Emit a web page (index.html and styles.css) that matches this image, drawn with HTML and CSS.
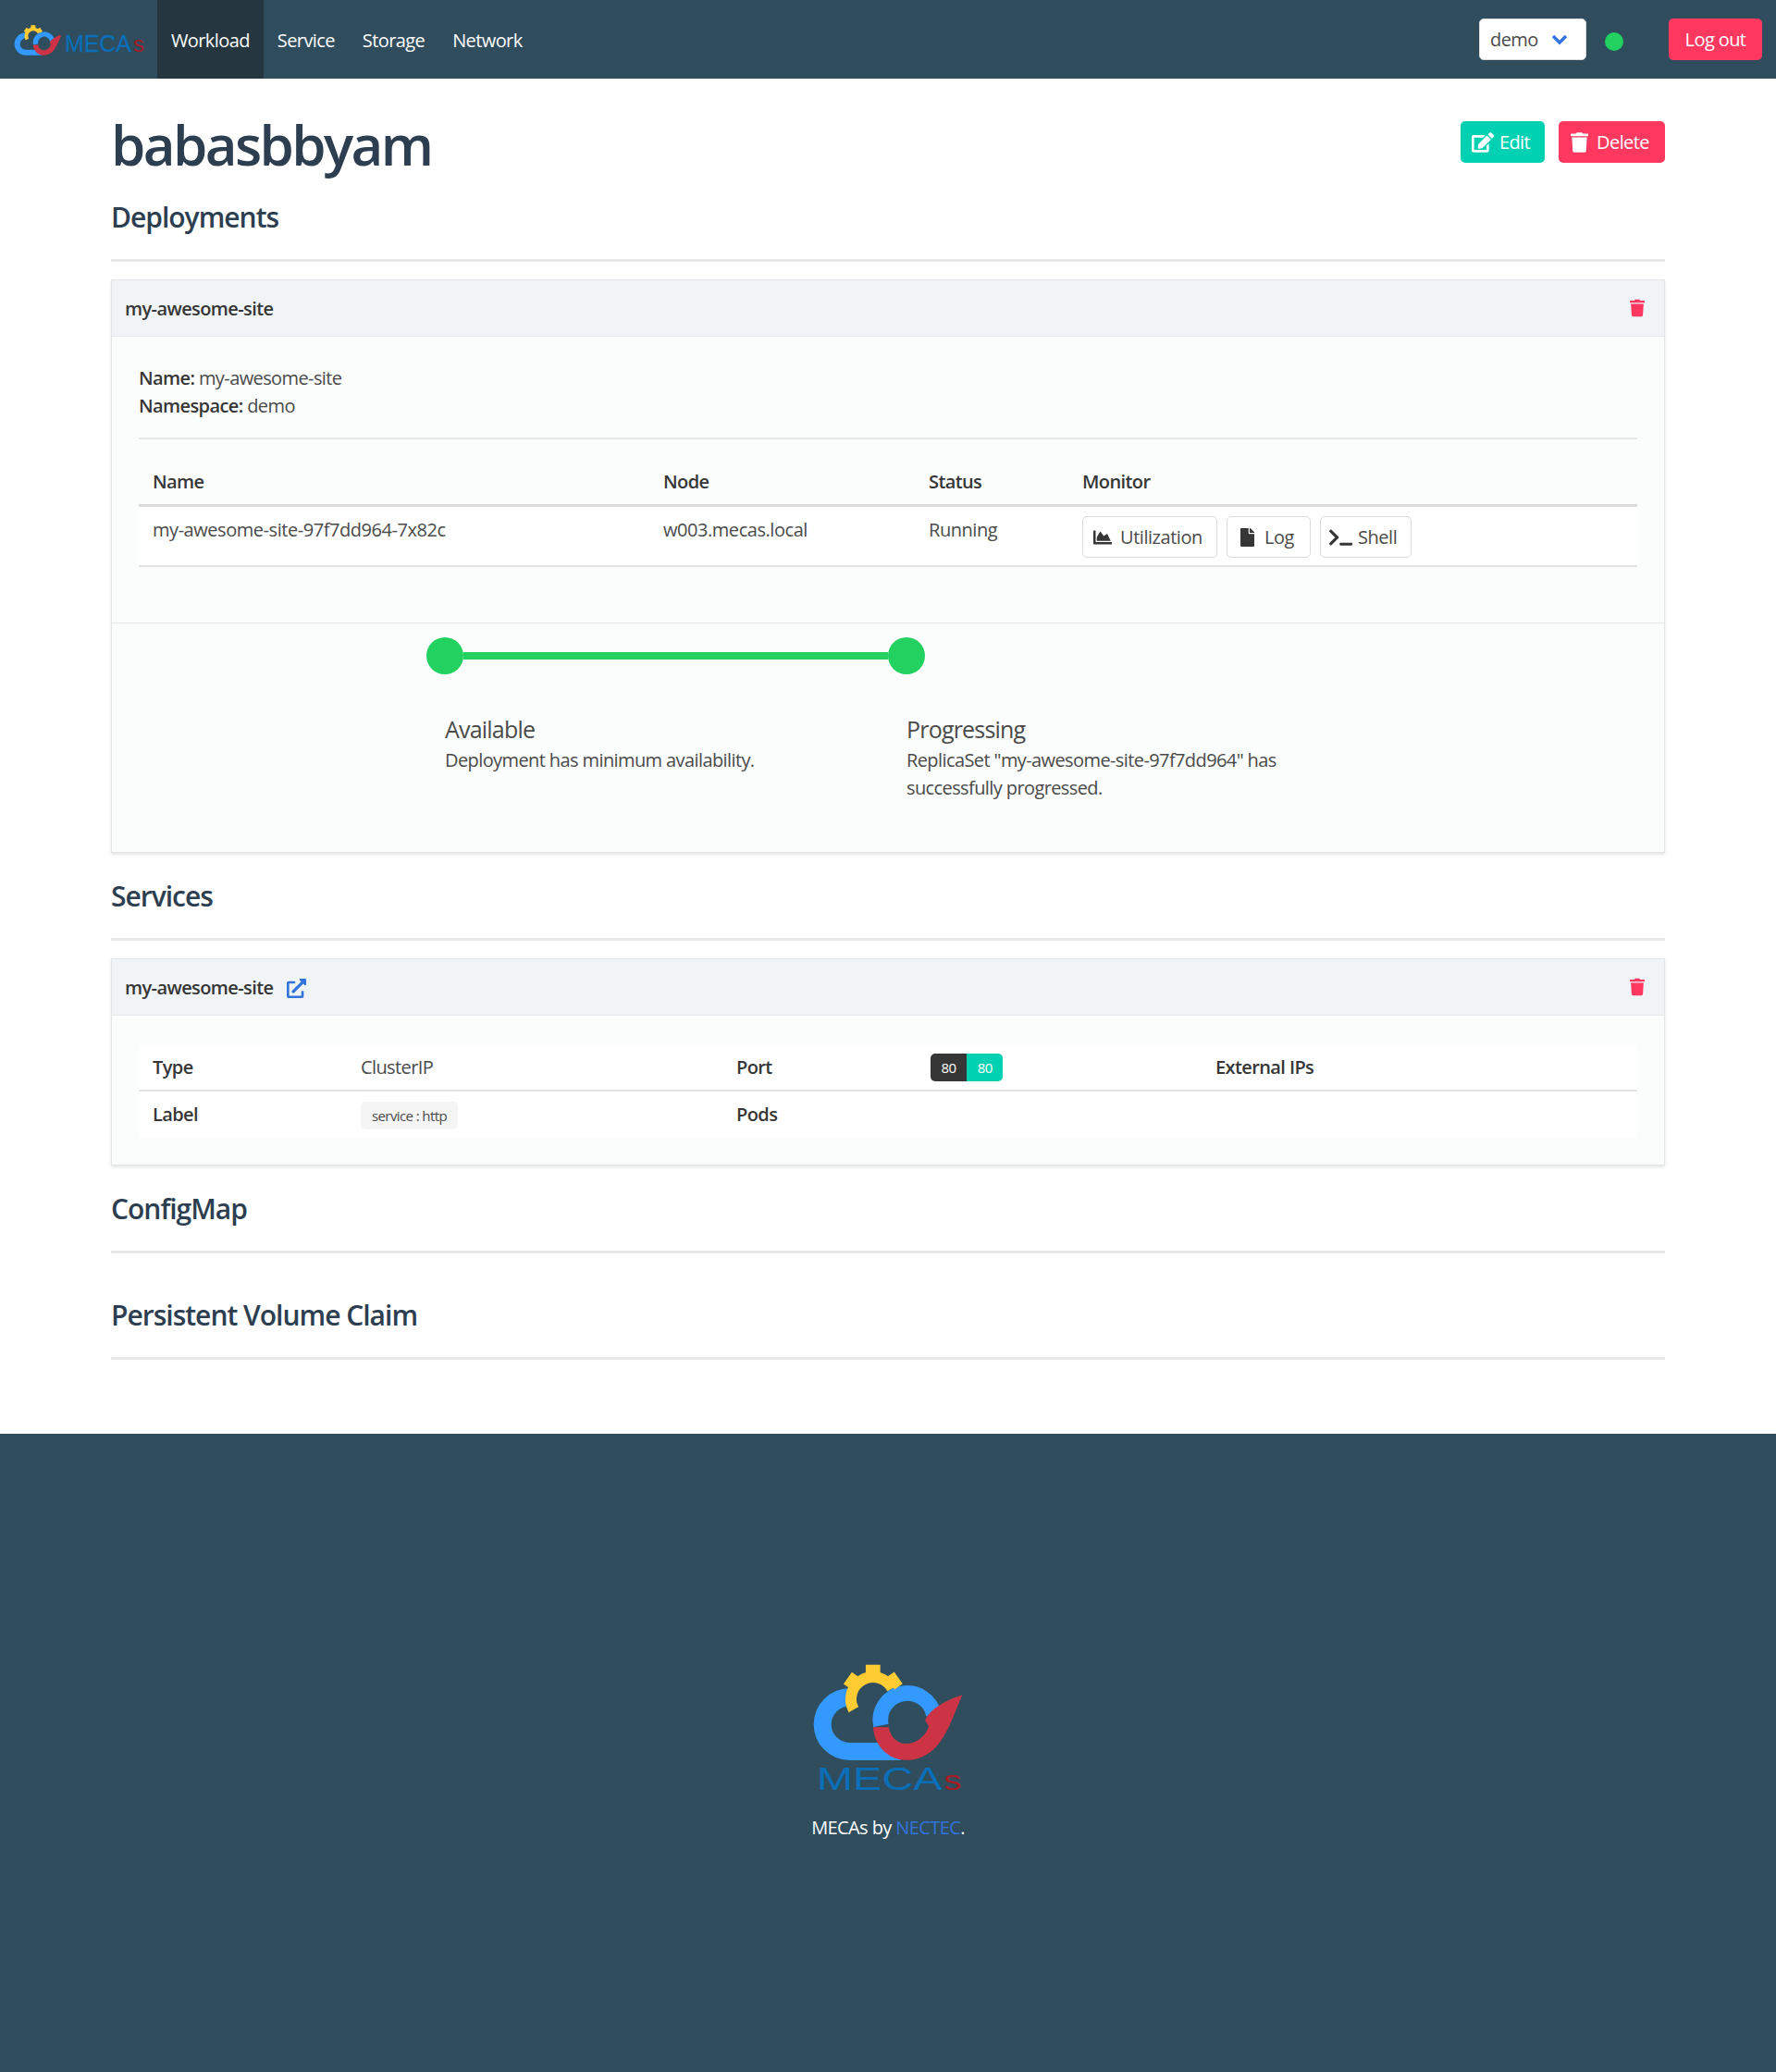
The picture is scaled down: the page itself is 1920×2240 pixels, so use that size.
FILE: index.html
```html
<!DOCTYPE html>
<html lang="en">
<head>
<meta charset="utf-8">
<title>babasbbyam</title>
<link rel="stylesheet" href="styles.css">
</head>
<body>
<svg class="defs" width="0" height="0" aria-hidden="true">
  <symbol id="cloud" viewBox="88 58 484 312">
    <path d="M206 165A87 87 0 0 0 206 340H370" fill="none" stroke="#3399ff" stroke-width="57"/>
    <path d="M307 256A82 82 0 0 1 478 222" fill="none" stroke="#3399ff" stroke-width="50"/>
    <path d="M282 262H333C336 292 360 315 388 315C420 315 452 292 462 258L450 240C462 205 520 172 570 158C545 215 525 280 488 322C462 352 425 368 388 368C330 368 285 320 282 262Z" fill="#cc3344"/>
    <g fill="#ffcc33">
      <path d="M219 205A66 66 0 1 1 344 137" fill="none" stroke="#ffcc33" stroke-width="36"/>
      <rect x="258" y="60" width="47" height="32"/>
      <rect x="258" y="60" width="47" height="32" transform="rotate(-55 282 160)"/>
      <rect x="258" y="60" width="47" height="32" transform="rotate(55 282 160)"/>
    </g>
  </symbol>
  <symbol id="i-trash" viewBox="0 0 448 512"><path fill="currentColor" d="M432 32H312l-9.4-18.7A24 24 0 0 0 281.1 0H166.8a23.72 23.72 0 0 0-21.4 13.3L136 32H16A16 16 0 0 0 0 48v32a16 16 0 0 0 16 16h416a16 16 0 0 0 16-16V48a16 16 0 0 0-16-16zM53.2 467a48 48 0 0 0 47.9 45h245.8a48 48 0 0 0 47.9-45L416 128H32z"/></symbol>
  <symbol id="i-edit" viewBox="0 0 576 512"><path fill="currentColor" d="M402.6 83.2l90.2 90.2c3.8 3.8 3.8 10 0 13.8L274.4 405.6l-92.8 10.3c-12.4 1.4-22.9-9.1-21.5-21.5l10.3-92.8L388.8 83.2c3.8-3.8 10-3.8 13.8 0zm162-22.9l-48.8-48.8c-15.2-15.2-39.9-15.2-55.2 0l-35.4 35.4c-3.8 3.8-3.8 10 0 13.8l90.2 90.2c3.8 3.8 10 3.8 13.8 0l35.4-35.4c15.2-15.3 15.2-40 0-55.2zM384 346.2V448H64V128h229.8c3.2 0 6.2-1.3 8.5-3.5l40-40c7.6-7.6 2.2-20.5-8.5-20.5H48C21.5 64 0 85.5 0 112v352c0 26.5 21.5 48 48 48h352c26.5 0 48-21.5 48-48V306.2c0-10.7-12.9-16-20.5-8.5l-40 40c-2.2 2.3-3.5 5.3-3.5 8.5z"/></symbol>
  <symbol id="i-chart" viewBox="0 0 512 512"><path fill="currentColor" d="M500 384c6.6 0 12 5.4 12 12v40c0 6.6-5.4 12-12 12H12c-6.6 0-12-5.4-12-12V76c0-6.6 5.4-12 12-12h40c6.6 0 12 5.4 12 12v308h436zM372.7 159.5L288 216l-85.3-113.7c-5.1-6.8-15.5-6.3-19.9 1L96 248v104h384l-89.9-187.8c-3.2-6.5-11.4-8.7-17.4-4.7z"/></symbol>
  <symbol id="i-file" viewBox="0 0 384 512"><path fill="currentColor" d="M224 136V0H24C10.7 0 0 10.7 0 24v464c0 13.3 10.7 24 24 24h336c13.3 0 24-10.7 24-24V160H248c-13.2 0-24-10.8-24-24zm160-14.1v6.1H256V0h6.1c6.4 0 12.5 2.5 17 7l97.9 98c4.5 4.5 7 10.6 7 16.9z"/></symbol>
  <symbol id="i-term" viewBox="0 0 640 512"><path fill="currentColor" d="M257.981 272.971L63.638 467.314c-9.373 9.373-24.569 9.373-33.941 0L7.029 444.647c-9.357-9.357-9.375-24.522-.04-33.901L161.011 256 6.99 101.255c-9.335-9.379-9.317-24.544.04-33.901l22.667-22.667c9.373-9.373 24.569-9.373 33.941 0L257.981 239.03c9.373 9.372 9.373 24.568 0 33.941zM640 456v-32c0-13.255-10.745-24-24-24H312c-13.255 0-24 10.745-24 24v32c0 13.255 10.745 24 24 24h304c13.255 0 24-10.745 24-24z"/></symbol>
  <symbol id="i-ext" viewBox="0 0 512 512"><path fill="currentColor" d="M432,320H400a16,16,0,0,0-16,16V448H64V128H208a16,16,0,0,0,16-16V80a16,16,0,0,0-16-16H48A48,48,0,0,0,0,112V464a48,48,0,0,0,48,48H400a48,48,0,0,0,48-48V336A16,16,0,0,0,432,320ZM488,0h-128c-21.37,0-32.05,25.91-17,41l35.73,35.73L135,320.37a24,24,0,0,0,0,34L157.67,377a24,24,0,0,0,34,0L435.28,133.32,471,169c15,15,41,4.5,41-17V24A24,24,0,0,0,488,0Z"/></symbol>
</svg>

<nav class="navbar">
  <a class="brand" href="#">
    <svg class="brand-cloud"><use href="#cloud"/></svg>
    <svg class="brand-word" viewBox="0 0 88 30">
      <text x="0" y="24" textLength="72" lengthAdjust="spacingAndGlyphs" class="word word-small">MECA</text>
      <text x="74" y="24" textLength="12" lengthAdjust="spacingAndGlyphs" class="word-s">s</text>
    </svg>
  </a>
  <a class="nav-item is-active" href="#">Workload</a>
  <a class="nav-item" href="#">Service</a>
  <a class="nav-item" href="#">Storage</a>
  <a class="nav-item" href="#">Network</a>
  <div class="nav-end">
    <div class="select"><span>demo</span><svg class="chevron" viewBox="0 0 18 12"><path d="M2 2l7 7 7-7" fill="none" stroke="currentColor" stroke-width="3.4"/></svg></div>
    <span class="dot"></span>
    <a class="btn btn-danger btn-logout" href="#">Log out</a>
  </div>
</nav>

<main class="container">
  <header class="page-head">
    <h1>babasbbyam</h1>
    <div class="actions">
      <a class="btn btn-primary" href="#"><svg class="ic ic-edit"><use href="#i-edit"/></svg>Edit</a>
      <a class="btn btn-danger" href="#"><svg class="ic ic-del"><use href="#i-trash"/></svg>Delete</a>
    </div>
  </header>

  <section class="block">
    <h2>Deployments</h2>
    <hr class="rule">
    <div class="card">
      <div class="card-head"><span class="card-title">my-awesome-site</span><svg class="ic-trash"><use href="#i-trash"/></svg></div>
      <div class="card-body">
        <p><strong>Name:</strong> my-awesome-site</p>
        <p><strong>Namespace:</strong> demo</p>
        <hr class="inner-rule">
        <table class="pods">
          <colgroup><col class="c-name"><col class="c-node"><col class="c-status"><col></colgroup>
          <thead><tr><th>Name</th><th>Node</th><th>Status</th><th>Monitor</th></tr></thead>
          <tbody><tr>
            <td>my-awesome-site-97f7dd964-7x82c</td>
            <td>w003.mecas.local</td>
            <td>Running</td>
            <td><div class="tools">
              <a class="tool tool-util" href="#"><svg class="ti ti-chart"><use href="#i-chart"/></svg>Utilization</a>
              <a class="tool tool-log" href="#"><svg class="ti ti-file"><use href="#i-file"/></svg>Log</a>
              <a class="tool tool-shell" href="#"><svg class="ti ti-term"><use href="#i-term"/></svg>Shell</a>
            </div></td>
          </tr></tbody>
        </table>
      </div>
      <div class="timeline">
        <div class="track"><span class="node"></span><span class="link"></span><span class="node"></span></div>
        <div class="steps">
          <div class="step"><h3>Available</h3><p>Deployment has minimum availability.</p></div>
          <div class="step"><h3>Progressing</h3><p>ReplicaSet "my-awesome-site-97f7dd964" has successfully progressed.</p></div>
        </div>
      </div>
    </div>
  </section>

  <section class="block">
    <h2>Services</h2>
    <hr class="rule">
    <div class="card">
      <div class="card-head"><span class="card-title">my-awesome-site<svg class="ic-ext"><use href="#i-ext"/></svg></span><svg class="ic-trash"><use href="#i-trash"/></svg></div>
      <div class="card-body card-body-svc">
        <table class="svc">
          <colgroup><col class="s-a"><col class="s-b"><col class="s-c"><col class="s-d"><col></colgroup>
          <tbody>
            <tr class="svc-top"><th>Type</th><td>ClusterIP</td><th>Port</th><td><span class="ports"><span class="p-dark">80</span><span class="p-teal">80</span></span></td><th>External IPs</th></tr>
            <tr class="svc-bottom"><th>Label</th><td><span class="tag">service : http</span></td><th>Pods</th><td></td><td></td></tr>
          </tbody>
        </table>
      </div>
    </div>
  </section>

  <section class="block">
    <h2>ConfigMap</h2>
    <hr class="rule">
  </section>

  <section class="block block-pvc">
    <h2>Persistent Volume Claim</h2>
    <hr class="rule">
  </section>
</main>

<footer class="footer">
  <svg class="foot-logo" viewBox="88 58 484 412">
    <use href="#cloud" x="88" y="58" width="484" height="312"/>
    <text x="100" y="465" textLength="405" lengthAdjust="spacingAndGlyphs" class="word word-big">MECA</text>
    <text x="510" y="465" textLength="58" lengthAdjust="spacingAndGlyphs" class="word-s word-s-big">s</text>
  </svg>
  <p>MECAs by <a href="#">NECTEC</a>.</p>
</footer>
</body>
</html>
```
FILE: styles.css
```css
* { box-sizing: border-box; }
html, body { margin: 0; padding: 0; }
body {
  font-family: "Open Sans", "Noto Sans", "Liberation Sans", sans-serif;
  font-size: 20px;
  line-height: 30px;
  color: #4a4a4a;
  background: #fff;
  letter-spacing: -0.6px;
}
a { text-decoration: none; color: inherit; }
p { margin: 0; }
.defs { position: absolute; }
svg { overflow: visible; }

/* navbar */
.navbar { display: flex; height: 85px; background: #304d5d; color: #fff; align-items: stretch; }
.brand { width: 170px; display: flex; align-items: flex-start; padding: 27px 0 0 15px; }
.brand-cloud { width: 52px; height: 33px; flex: none; }
.brand-word { width: 88px; height: 30px; margin: 5px 0 0 3px; flex: none; }
.word { font-family: "Liberation Sans", sans-serif; font-size: 27px; fill: #0a6fb8; letter-spacing: 0; }
.word-small { font-size: 25.5px; stroke: #0a6fb8; stroke-width: .3px; }
.word-big { font-size: 104px; }
.word-s { font-family: "Liberation Sans", sans-serif; font-size: 23px; fill: #a51c24; letter-spacing: 0; }
.word-s-big { font-size: 90px; }
.nav-item { display: flex; align-items: center; padding: 2px 15px 0; }
.nav-item.is-active { background: #253640; }
.nav-end { margin-left: auto; display: flex; align-items: center; padding-right: 15px; }
.select { width: 116px; height: 45px; background: #fff; border-radius: 5px; color: #4a4a4a; display: flex; align-items: center; justify-content: space-between; padding: 1px 19px 0 11px; border: 1px solid #dbdbdb; }
.chevron { width: 18px; height: 12px; color: #3273dc; }
.dot { width: 20px; height: 20px; border-radius: 50%; background: #23d160; margin: 5px 49px 0 20px; }

/* buttons */
.btn { display: inline-flex; align-items: center; justify-content: center; height: 45px; padding: 1px 16px 0 12px; border-radius: 5px; color: #fff; }
.btn-danger { background: #ff3860; width: 101px; }
.btn-logout { padding: 1px 12px 0; }
.btn-primary { background: #00d1b2; width: 91px; }
.actions .btn-danger { width: 115px; }
.actions { display: flex; gap: 15px; margin-top: 8px; }
.ic { height: 22px; flex: none; }
.ic-edit { width: 24px; margin-right: 6px; }
.ic-del { width: 19px; margin-right: 9px; }

/* page */
.container { margin: 0 120px; padding: 38px 0 80px; }
.page-head { display: flex; justify-content: space-between; align-items: flex-start; }
h1 { margin: 0; font-size: 60px; line-height: 66px; font-weight: 550; color: #2c3e50; letter-spacing: -2.6px; }
h2 { margin: 0; font-size: 30px; line-height: 38px; font-weight: 550; color: #2c3e50; letter-spacing: -1px; }
.block { margin-top: 28px; }
.page-head + .block { margin-top: 27px; }
.block-pvc { margin-top: 48px; }
.rule { border: 0; height: 3px; background: #e8e8e8; margin: 26px 0 0; }

/* card */
.card { margin-top: 19px; background: #fbfcfc; border: 1px solid #e3e5e6; box-shadow: 0 2px 3px rgba(10, 10, 10, .1); }
.card-head { height: 61px; background: #f1f4f6; border-bottom: 1px solid #e6e8ea; display: flex; align-items: center; justify-content: space-between; padding: 0 21px 0 14px; }
.card-title { font-weight: 600; color: #363636; display: flex; align-items: center; padding-top: 2px; }
.ic-trash { width: 16px; height: 20px; color: #ff3860; }
.ic-ext { width: 23px; height: 21px; color: #3273dc; margin-left: 14px; }
.card-body { padding: 30px 29px 60px; }
.card-body-svc { padding: 31px 29px 29px; }
strong { font-weight: 600; color: #363636; }
.inner-rule { border: 0; height: 2px; background: #e8e8e8; margin: 19px 0 20px; }

/* tables */
table { border-collapse: collapse; table-layout: fixed; width: 100%; }
th { font-weight: 600; color: #363636; text-align: left; }
.pods th { padding: 11px 15px 9px; border-bottom: 3px solid #dbdbdb; height: 50px; }
.pods td { background: #fff; vertical-align: top; padding: 10px 15px 8px; height: 63px; border-bottom: 2px solid #e4e4e4; letter-spacing: -0.45px; }
.c-name { width: 552px; }
.c-node { width: 287px; }
.c-status { width: 166px; }
.tools { display: flex; gap: 10px; }
.tool { display: flex; align-items: center; height: 45px; border: 1px solid #dbdbdb; border-radius: 5px; background: #fff; color: #4a4a4a; padding-left: 11px; }
.tool-util { width: 146px; }
.tool-log { width: 91px; padding-left: 14px; }
.tool-shell { width: 99px; padding-left: 9px; }
.ti { color: #363636; flex: none; }
.ti-chart { width: 20px; height: 20px; margin-right: 9px; }
.ti-file { width: 15px; height: 20px; margin-right: 11px; }
.ti-term { width: 25px; height: 20px; margin-right: 6px; }

/* timeline */
.timeline { border-top: 1px solid #e4e6e7; padding: 15px 0 54px 340px; height: 248px; }
.track { display: flex; align-items: center; width: 539px; }
.node { width: 40px; height: 40px; border-radius: 50%; background: #23d160; flex: none; }
.link { flex: 1; height: 8px; background: #23d160; }
.steps { display: grid; grid-template-columns: 499px 425px; margin: 41px 0 0 20px; }
h3 { margin: 0; font-size: 25px; line-height: 37px; font-weight: 400; color: #4a4a4a; letter-spacing: -0.8px; }

/* services */
.svc th, .svc td { background: #fff; padding: 0 15px; }
.svc-top th, .svc-top td { height: 50px; border-bottom: 2px solid #e4e4e4; }
.svc-bottom th, .svc-bottom td { height: 51px; }
.s-a { width: 225px; }
.s-b { width: 406px; }
.s-c { width: 210px; }
.s-d { width: 308px; }
.ports { display: inline-flex; font-size: 15px; line-height: 30px; color: #fff; vertical-align: middle; letter-spacing: -.5px; }
.p-dark, .p-teal { display: block; height: 30px; padding: 0 11.5px; }
.p-dark { background: #363636; border-radius: 5px 0 0 5px; }
.p-teal { background: #00d1b2; border-radius: 0 5px 5px 0; }
.tag { display: inline-block; height: 30px; line-height: 30px; padding: 0 12px; font-size: 15px; background: #f5f5f5; border-radius: 5px; letter-spacing: -.6px; vertical-align: middle; }

/* footer */
.footer { height: 690px; background: #304d5d; color: #fff; display: flex; flex-direction: column; align-items: center; justify-content: center; }
.foot-logo { width: 162px; height: 138px; display: block; margin-bottom: 24px; }
.footer a { color: #3273dc; }
```
